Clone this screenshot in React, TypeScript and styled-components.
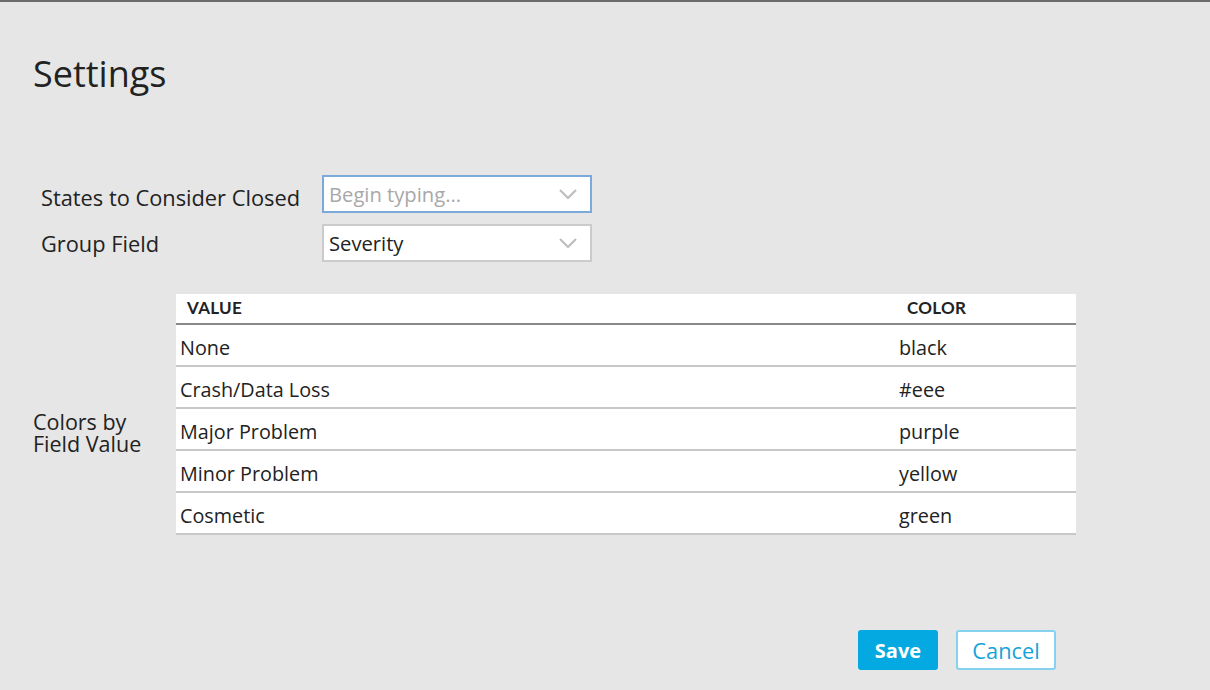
import React from "react";
import styled, { createGlobalStyle } from "styled-components";

const Global = createGlobalStyle`
  html, body { margin: 0; padding: 0; background: #e6e6e6; }
  body { font-family: "Open Sans", "Noto Sans", sans-serif; color: #222; }
  * { box-sizing: border-box; }
`;

const Page = styled.div`
  width: 1210px;
  height: 690px;
  border-top: 2px solid #6b6b6b;
  background: #e6e6e6;
  padding: 0 33px;
  display: flex;
  flex-direction: column;
`;

const Title = styled.h1`
  margin: 49px 0 0 0;
  font-size: 36px;
  line-height: 46px;
  font-weight: 400;
  color: #222;
`;

const Form = styled.div`
  margin-top: 78px;
  padding-left: 8px;
  display: flex;
  flex-direction: column;
  gap: 11px;
`;

const FieldRow = styled.div`
  display: flex;
  align-items: center;
`;

const Label = styled.label<{ $drop: number }>`
  width: 281px;
  font-size: 21.8px;
  line-height: 26px;
  padding-top: ${(p) => p.$drop}px;
  color: #222;
`;

const Select = styled.div<{ $focused?: boolean }>`
  width: 270px;
  height: 38px;
  background: #fff;
  border: 2px solid ${(p) => (p.$focused ? "#7ba9d9" : "#cbcbcb")};
  display: flex;
  align-items: center;
  padding: 0 12px 0 5px;
  justify-content: space-between;
`;

const SelectText = styled.span<{ $placeholder?: boolean }>`
  font-size: 20.2px;
  color: ${(p) => (p.$placeholder ? "#a8a8a8" : "#222")};
`;

const Chevron = () => (
  <svg width="20" height="12" viewBox="0 0 20 12">
    <polyline points="2,2 10,10 18,2" fill="none" stroke="#bdbdbd" strokeWidth="2.2" />
  </svg>
);

const ColorsSection = styled.div`
  margin-top: 32px;
  display: flex;
  align-items: flex-start;
`;

const SideLabel = styled.div`
  width: 143px;
  font-size: 21.5px;
  line-height: 22px;
  padding-top: 117px;
  color: #222;
`;

const Table = styled.div`
  width: 900px;
  background: #fff;
  display: flex;
  flex-direction: column;
`;

const HeaderRow = styled.div`
  display: grid;
  grid-template-columns: 1fr 169px;
  height: 31px;
  align-items: center;
  border-bottom: 2px solid #888;
`;

const HeaderCell = styled.div<{ $indent: number }>`
  padding-left: ${(p) => p.$indent}px;
  padding-bottom: 2px;
  font-family: "Lato", "Open Sans", sans-serif;
  font-weight: 700;
  font-size: 17px;
  letter-spacing: 0.3px;
  color: #222;
`;

const Row = styled.div`
  display: grid;
  grid-template-columns: 1fr 181px;
  height: 42px;
  align-items: center;
  padding-top: 4px;
  border-bottom: 2px solid #c8c8c8;
`;

const Cell = styled.div`
  font-size: 19.8px;
  color: #222;
  padding-left: 4px;
`;

const Footer = styled.div`
  margin-top: 95px;
  padding-right: 121px;
  display: flex;
  justify-content: flex-end;
  gap: 18px;
`;

const Button = styled.button<{ $primary?: boolean }>`
  height: 40px;
  font-family: "Open Sans", sans-serif;
  font-size: ${(p) => (p.$primary ? "20px" : "21.8px")};
  font-weight: ${(p) => (p.$primary ? 700 : 400)};
  border-radius: 3px;
  cursor: pointer;
  padding: 0;
  width: ${(p) => (p.$primary ? "80px" : "100px")};
  background: ${(p) => (p.$primary ? "#03a9e0" : "#fff")};
  color: ${(p) => (p.$primary ? "#fff" : "#14a3d8")};
  border: 2px solid ${(p) => (p.$primary ? "#03a9e0" : "#84d2ef")};
`;

const rows = [
  ["None", "black"],
  ["Crash/Data Loss", "#eee"],
  ["Major Problem", "purple"],
  ["Minor Problem", "yellow"],
  ["Cosmetic", "green"],
];

export default function App() {
  return (
    <>
      <Global />
      <Page>
        <Title>Settings</Title>
        <Form>
          <FieldRow>
            <Label $drop={8}>States to Consider Closed</Label>
            <Select $focused>
              <SelectText $placeholder>Begin typing...</SelectText>
              <Chevron />
            </Select>
          </FieldRow>
          <FieldRow>
            <Label $drop={2}>Group Field</Label>
            <Select>
              <SelectText>Severity</SelectText>
              <Chevron />
            </Select>
          </FieldRow>
        </Form>
        <ColorsSection>
          <SideLabel>
            Colors by
            <br />
            Field Value
          </SideLabel>
          <Table>
            <HeaderRow>
              <HeaderCell $indent={11}>VALUE</HeaderCell>
              <HeaderCell $indent={0}>COLOR</HeaderCell>
            </HeaderRow>
            {rows.map(([v, c]) => (
              <Row key={v}>
                <Cell>{v}</Cell>
                <Cell>{c}</Cell>
              </Row>
            ))}
          </Table>
        </ColorsSection>
        <Footer>
          <Button $primary>Save</Button>
          <Button>Cancel</Button>
        </Footer>
      </Page>
    </>
  );
}
